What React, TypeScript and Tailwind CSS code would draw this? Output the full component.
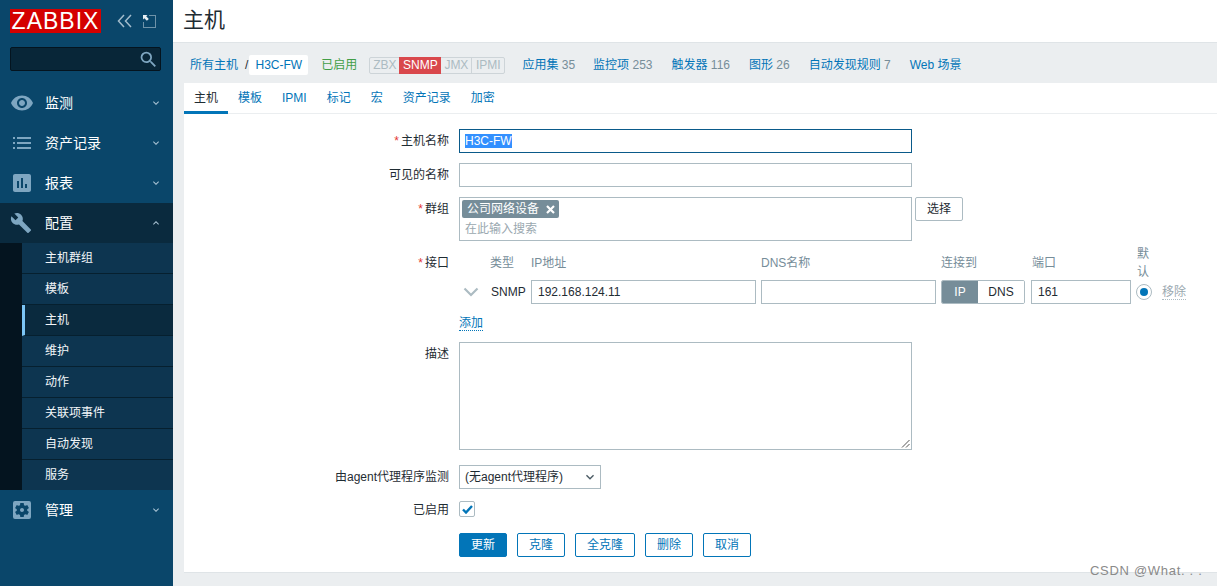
import React from 'react';
import { MdVisibility, MdAssessment, MdBuild, MdSettingsApplications, MdKeyboardArrowDown, MdKeyboardArrowUp, MdSearch } from 'react-icons/md';

const font = { fontFamily: '"Liberation Sans", "Noto Sans CJK SC", sans-serif' };

const subItems = ['主机群组', '模板', '主机', '维护', '动作', '关联项事件', '自动发现', '服务'];
const navLinks: [string, string, string][] = [
  ['应用集', '35', 'mr-[18px]'],
  ['监控项', '253', 'mr-[19px]'],
  ['触发器', '116', 'mr-[19px]'],
  ['图形', '26', 'mr-[19px]'],
  ['自动发现规则', '7', 'mr-[19px]'],
];
const tabs = ['主机', '模板', 'IPMI', '标记', '宏', '资产记录', '加密'];

const ListIcon = () => (
  <svg width="18" height="12" viewBox="0 0 18 12" fill="currentColor" className="ml-[3px]">
    <path d="M0 0h2v2H0zM4 0h14v2H4zM0 5h2v2H0zM4 5h14v2H4zM0 10h2v2H0zM4 10h14v2H4z" />
  </svg>
);

const MenuItem = ({ icon, label, open }: { icon: React.ReactNode; label: string; open?: boolean }) => (
  <div className={`h-10 flex items-center text-[14px] text-white ${open ? 'bg-[#0a2a3e]' : ''}`}>
    <div className="w-[45px] flex justify-start pl-[10px] text-[#7ea6c1]">{icon}</div>
    <span className="flex-1">{label}</span>
    <span className="pr-[11px] text-[#a9c3d4]">
      {open ? <MdKeyboardArrowUp size={12} /> : <MdKeyboardArrowDown size={12} />}
    </span>
  </div>
);

const Row = ({ label, req, children, className }: { label: string; req?: boolean; children: React.ReactNode; className?: string }) => (
  <div className={`flex ${className ?? ''}`}>
    <div className="w-[275px] pr-[10px] pt-[4px] text-right leading-[16px] text-[#1f2c33]">
      {req && <span className="text-[#e33734] mr-[2px]">*</span>}
      {label}
    </div>
    <div className="flex-1 min-w-0">{children}</div>
  </div>
);

const boxClass = 'border border-[#acbbc2] bg-white';

const Btn = ({ children, primary }: { children: React.ReactNode; primary?: boolean }) => (
  <button className={`h-6 px-[11px] rounded-[2px] border border-[#0275b8] text-[12px] ${primary ? 'bg-[#0275b8] text-white' : 'bg-white text-[#0275b8]'}`}>
    {children}
  </button>
);

export default function App() {
  return (
    <div className="flex w-[1217px] h-[586px] overflow-hidden relative bg-[#ebeef0] text-[12px]" style={font}>
      <aside className="w-[173px] shrink-0 bg-[#0a466a] flex flex-col">
        <div className="flex items-center h-[47px] pl-[10px] pb-[5px]">
          <div className="w-[91px] h-6 bg-[#d40000] text-white text-[23px] leading-6 text-center tracking-[1px] font-light">ZABBIX</div>
          <svg width="16" height="14" viewBox="0 0 16 14" className="ml-[16px]" fill="none" stroke="#a3bccc" strokeWidth="1.5">
            <path d="M7 1 1.5 7 7 13M14 1 8.5 7 14 13" />
          </svg>
          <svg width="13" height="13" viewBox="0 0 13 13" className="ml-[10px]" fill="none">
            <path d="M6.5.5h6v12H.5v-6" stroke="#d5e0e8" strokeDasharray="1 1" />
            <path d="M0 0h4.5L3.2 1.3 5.8 3.9 3.9 5.8 1.3 3.2 0 4.5z" fill="#e8eef2" />
          </svg>
        </div>
        <div className="mx-[10px] h-6 w-[151px] rounded-[2px] bg-[#082638] border border-[#04141f] flex items-center justify-end pr-[1px] text-[#7ea6c1]">
          <MdSearch size={21} />
        </div>
        <nav className="mt-3">
          <MenuItem icon={<MdVisibility size={24} />} label="监测" />
          <MenuItem icon={<ListIcon />} label="资产记录" />
          <MenuItem icon={<MdAssessment size={24} />} label="报表" />
          <MenuItem icon={<MdBuild size={22} />} label="配置" open />
          <div className="flex bg-[#04141f]">
            <div className="w-[22px] shrink-0" />
            <div className="flex-1">
              {subItems.map((s) => (
                <div
                  key={s}
                  className={`h-[31px] last:h-[30px] flex items-center text-[12px] text-[#f2f6f8] border-b border-[#06202f] last:border-b-0 ${s === '主机' ? 'bg-[#0a2a3e] border-l-[3px] border-l-[#7cc5f5] pl-[20px]' : 'bg-[#0d3550] pl-[23px]'}`}
                >
                  {s}
                </div>
              ))}
            </div>
          </div>
          <MenuItem icon={<MdSettingsApplications size={24} />} label="管理" />
        </nav>
      </aside>

      <main className="flex-1 min-w-0">
        <header className="h-[43px] bg-white border-b border-[#dfe4e7] pl-[10px] text-[21px] leading-[40px] text-[#1f2c33]">主机</header>

        <div className="h-[40px] flex items-center pl-[17px] pt-[4px] text-[#0275b8]">
          <span>所有主机</span>
          <span className="text-[#1f2c33] ml-[7px] mr-[1px]">/</span>
          <span className="bg-white w-[59px] h-[20px] leading-[20px] text-center rounded-[2px]">H3C-FW</span>
          <span className="text-[#429e47] ml-[13px]">已启用</span>
          <div className="ml-[12px] flex h-[17px] leading-[15px] text-center text-[#acbbc2] border border-[#cdd4d8] rounded-[2px] bg-[#ebeef0]">
            <span className="w-[29px]">ZBX</span>
            <span className="w-[42px] -my-px bg-[#d9484c] text-white leading-[17px]">SNMP</span>
            <span className="w-[31px] border-r border-[#cdd4d8]">JMX</span>
            <span className="w-[32px]">IPMI</span>
          </div>
          <div className="ml-[17px] flex">
            {navLinks.map(([t, n, m]) => (
              <span key={t} className={m}>
                {t} <span className="text-[#768d99]">{n}</span>
              </span>
            ))}
            <span>Web 场景</span>
          </div>
        </div>

        <section className="ml-[11px] h-[490px] bg-white border-b border-[#dfe4e7]">
          <div className="h-[31px] flex border-b border-[#ebeef0] text-[#0275b8]">
            {tabs.map((t, i) => (
              <span
                key={t}
                className={`px-[10px] h-[31px] leading-[30px] ${i === 0 ? 'text-[#1f2c33] border-b-[3px] border-[#0275b8]' : ''}`}
              >
                {t}
              </span>
            ))}
          </div>

          <form className="pt-[15px] text-[#1f2c33]">
            <Row label="主机名称" req>
              <div className="w-[453px] h-6 border border-[#0a5a8a] px-[5px] leading-[22px] bg-white">
                <span className="bg-[#3390ff] text-white">H3C-FW</span>
              </div>
            </Row>
            <Row label="可见的名称" className="mt-[10px]">
              <div className={`w-[453px] h-6 ${boxClass}`} />
            </Row>
            <Row label="群组" req className="mt-[10px]">
              <div className="flex items-start">
                <div className={`w-[453px] h-[44px] ${boxClass} pl-[2px] pt-[2px]`}>
                  <div className="inline-flex items-center h-[18px] px-[5px] rounded-[2px] bg-[#768d99] text-white">
                    公司网络设备
                    <svg width="9" height="9" viewBox="0 0 9 9" className="ml-[7px] mr-[-1px]" stroke="white" strokeWidth="2.2" fill="none">
                      <path d="M1 1l7 7M8 1 1 8" />
                    </svg>
                  </div>
                  <div className="pl-[3px] mt-[2px] leading-[18px] text-[#9aa8af]">在此输入搜索</div>
                </div>
                <button type="button" className="ml-[3px] h-6 w-[48px] rounded-[2px] border border-[#acbbc2] bg-white">选择</button>
              </div>
            </Row>
            <Row label="接口" req className="mt-[4px] [&>div:first-child]:pt-[10px]">
              <div className="grid grid-cols-[31px_41px_230px_180px_90px_105px_26px_1fr] items-end leading-[18px] text-[#768d99]">
                <span />
                <span className="pb-[9px]">类型</span>
                <span className="pb-[9px]">IP地址</span>
                <span className="pb-[9px]">DNS名称</span>
                <span className="pb-[9px]">连接到</span>
                <span className="pb-[9px] pl-px">端口</span>
                <span className="w-[14px] ml-px">默认</span>
                <span />
              </div>
              <div className="grid grid-cols-[31px_41px_230px_180px_90px_105px_26px_1fr] items-center h-6 -mt-px text-[#1f2c33]">
                <svg width="16" height="10" viewBox="0 0 16 10" className="ml-[4px]" fill="none" stroke="#acbbc2" strokeWidth="2.2">
                  <path d="M1.5 1.5 8 8l6.5-6.5" />
                </svg>
                <span className="pl-px">SNMP</span>
                <div className={`w-[225px] h-6 ${boxClass} px-[6px] leading-[22px]`}>192.168.124.11</div>
                <div className={`w-[175px] h-6 ${boxClass}`} />
                <div className="flex w-[84px] h-6 rounded-[2px] border border-[#acbbc2] overflow-hidden text-center leading-[22px]">
                  <span className="w-[36px] bg-[#768d99] text-white">IP</span>
                  <span className="flex-1 bg-white">DNS</span>
                </div>
                <div className={`w-[100px] h-6 ${boxClass} px-[6px] leading-[22px]`}>161</div>
                <div className="w-4 h-4 rounded-full border border-[#acbbc2] flex items-center justify-center">
                  <div className="w-2 h-2 rounded-full bg-[#0275b8]" />
                </div>
                <span className="w-fit text-[#9aa8af] leading-[14px] border-b border-dotted border-[#acbbc2]">移除</span>
              </div>
              <div className="mt-[11px] leading-[16px] h-[16px]">
                <span className="text-[#0275b8] border-b border-dotted border-[#0275b8]">添加</span>
              </div>
            </Row>
            <Row label="描述" className="mt-[11px]">
              <div className={`w-[453px] h-[108px] ${boxClass} relative`}>
                <svg width="9" height="9" viewBox="0 0 9 9" className="absolute right-px bottom-px" stroke="#555" fill="none">
                  <path d="M1 8.5 8.5 1M5 8.5 8.5 5" />
                </svg>
              </div>
            </Row>
            <Row label="由agent代理程序监测" className="mt-[15px]">
              <div className={`w-[142px] h-6 ${boxClass} flex items-center justify-between pl-[5px] pr-[2px]`}>
                <span>(无agent代理程序)</span>
                <MdKeyboardArrowDown size={16} className="text-[#4a5a63]" />
              </div>
            </Row>
            <Row label="已启用" className="mt-[12px] [&>div:first-child]:pt-[1px]">
              <div className="w-4 h-4 rounded-[2px] border border-[#acbbc2] flex items-center justify-center">
                <svg width="11" height="9" viewBox="0 0 11 9" fill="none" stroke="#0275b8" strokeWidth="2.4">
                  <path d="M1 4.5 4 7.5 10 1" />
                </svg>
              </div>
            </Row>
            <div className="flex gap-[10px] mt-[15px] ml-[275px]">
              <Btn primary>更新</Btn>
              <Btn>克隆</Btn>
              <Btn>全克隆</Btn>
              <Btn>删除</Btn>
              <Btn>取消</Btn>
            </div>
          </form>
        </section>
      </main>

      <div className="absolute left-[1090px] top-[562px] text-[13px] leading-[18px] text-[#8a8a8a] tracking-[0.7px]">CSDN @What. . .</div>
    </div>
  );
}
